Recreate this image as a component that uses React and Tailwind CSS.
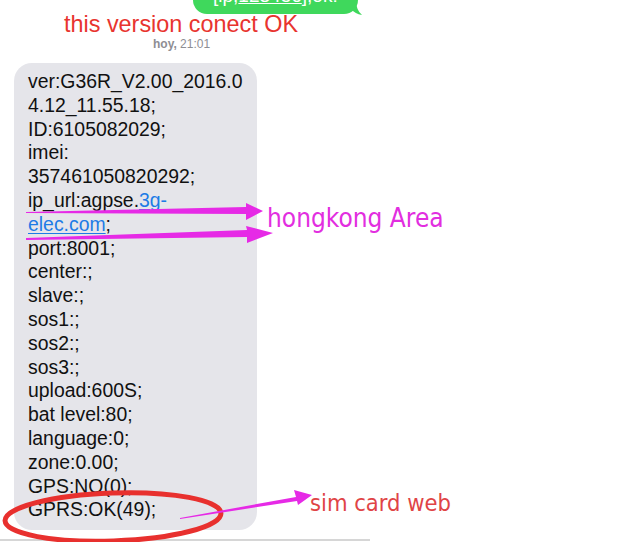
import React from 'react';

const lines = [
  'ver:G36R_V2.00_2016.0',
  '4.12_11.55.18;',
  'ID:6105082029;',
  'imei:',
  '357461050820292;',
  'LINK1',
  'LINK2',
  'port:8001;',
  'center:;',
  'slave:;',
  'sos1:;',
  'sos2:;',
  'sos3:;',
  'upload:600S;',
  'bat level:80;',
  'language:0;',
  'zone:0.00;',
  'GPS:NO(0);',
  'GPRS:OK(49);',
];

const Line = ({ text }) => {
  if (text === 'LINK1') {
    return (
      <div>
        ip_url:agpse.<span className="text-[#1d7be6] underline decoration-1 underline-offset-2">3g-</span>
      </div>
    );
  }
  if (text === 'LINK2') {
    return (
      <div>
        <span className="text-[#1d7be6] underline decoration-1 underline-offset-2">elec.com</span>;
      </div>
    );
  }
  return <div>{text}</div>;
};

const Annotations = () => (
  <svg className="absolute inset-0 pointer-events-none" width="631" height="542" viewBox="0 0 631 542">
    {/* bubble tail */}
    <path d="M350,0 L350,8 Q355,14 362,15 Q356,10 356,0 Z" fill="#3fd85c" />
    {/* arrow 1 */}
    <polygon points="26,212 246,207 246,203 263,211 246,220 246,214 26,213" fill="#e62ae6" />
    {/* arrow 2 */}
    <polygon points="26,238 247,230 246,226 273,233 247,243 247,237 26,240" fill="#e62ae6" />
    {/* red ellipse */}
    <ellipse cx="113" cy="517" rx="108" ry="24" fill="none" stroke="#e8302e" strokeWidth="5" transform="rotate(-2 113 517)" />
    {/* arrow 3 */}
    <polygon points="180,518 296,497 294,490 312,495 298,505 297,501 180,519" fill="#e62ae6" />
  </svg>
);

const labelFont = { fontFamily: '"DejaVu Sans Condensed", "DejaVu Sans", sans-serif', fontStretch: 'condensed' };

export default function App() {
  return (
    <div className="relative w-[631px] h-[542px] overflow-hidden bg-white" style={{ fontFamily: '"Liberation Sans", Arial, sans-serif' }}>
      <div className="flex flex-col items-start">
        {/* green bubble at top, mostly cut off */}
        <div className="relative ml-[193px] w-[165px] h-[14px] bg-[#3fd85c] rounded-b-[14px] overflow-hidden">
          <div className="pl-[20px] -mt-[15px] text-white text-[19px] leading-[22px] whitespace-nowrap">
            [ip,<span className="underline">123456</span>],ok!
          </div>
        </div>

        <div className="-mt-[3px] ml-[64px] text-[23.4px] leading-[26px] text-[#e8342f]">this version conect OK</div>
        <div className="ml-[153px] text-[12px] leading-[14px] text-[#8e8e93]">
          <span className="font-bold">hoy,</span> 21:01
        </div>

        <div className="mt-[12px] ml-[14px] w-[243px] bg-[#e5e5ea] rounded-[18px] pl-[14px] pr-[10px] pt-[7px] pb-[8px] text-[19.4px] leading-[23.8px] text-[#111]">
          {lines.map((l, i) => (
            <Line key={i} text={l} />
          ))}
        </div>

        <div className="mt-[9px] w-[370px] h-[2px] bg-[#d6d6d6]" />
      </div>

      <Annotations />

      <div className="absolute left-[267px] top-[202px] text-[26px] leading-[32px] text-[#e22ee0]" style={labelFont}>
        hongkong Area
      </div>
      <div className="absolute left-[310px] top-[489px] text-[23.5px] leading-[28px] text-[#e04446]" style={labelFont}>
        sim card web
      </div>
    </div>
  );
}
